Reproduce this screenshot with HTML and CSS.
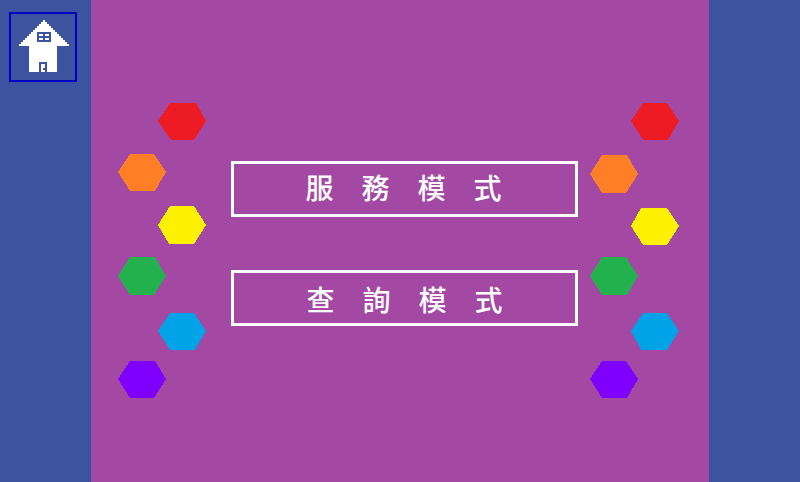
FILE: index.html
```html
<!DOCTYPE html>
<html lang="zh-Hant">
<head>
<meta charset="utf-8">
<meta name="viewport" content="width=device-width, initial-scale=1">
<title>模式</title>
<link rel="stylesheet" href="styles.css">
</head>
<body>
<nav class="side">
  <a class="home" href="#" aria-label="首頁">
    <svg class="home-icon" viewBox="0 0 32 33" shape-rendering="crispEdges" aria-hidden="true">
      <path class="house" fill-rule="evenodd" d="M16 3h1v1h1v1h1v1h1v1h1v1h1v1h1v1h1v1h1v1h1v1h1v1h1v1h1v1h-6v13H9V16H4v-1h1v-1h1v-1h1v-1h1v-1h1v-1h1V9h1V8h1V7h1V6h1V5h1V4h1z M13 9v5h7V9z M14 24v5h4v-5z"/>
      <path class="house" d="M14 10h2v1h-2z M17 10h2v1h-2z M14 12h2v1h-2z M17 12h2v1h-2z M15 25h2v2h-1v1h1v1h-2z"/>
    </svg>
  </a>
</nav>
<main class="stage">
  <svg class="gems" viewBox="0 0 89 296" shape-rendering="crispEdges" aria-hidden="true">
    <polygon class="red" points="40,18 52,0 78,0 88,18 76,37 53,37"/>
    <polygon class="orange" points="0,69 12,51 36,51 48,69 37,88 12,88"/>
    <polygon class="yellow" points="40,122 52,103 76,103 88,122 76,141 51,141"/>
    <polygon class="green" points="0,173 12,154 37,154 48,173 36,192 12,192"/>
    <polygon class="blue" points="40,228 52,210 76,210 88,228 77,247 52,247"/>
    <polygon class="violet" points="0,276 12,258 37,258 48,276 36,295 12,295"/>
  </svg>
  <div class="menu">
    <button class="mode mode-service" type="button">服　務　模　式</button>
    <button class="mode mode-query" type="button">查　詢　模　式</button>
  </div>
  <svg class="gems" viewBox="0 0 89 296" shape-rendering="crispEdges" aria-hidden="true">
    <polygon class="red" points="41,18 53,0 77,0 89,18 78,37 53,37"/>
    <polygon class="orange" points="0,71 12,52 37,52 48,71 36,90 12,90"/>
    <polygon class="yellow" points="41,123 51,105 77,105 89,123 77,142 53,142"/>
    <polygon class="green" points="0,173 12,154 36,154 48,173 37,192 12,192"/>
    <polygon class="blue" points="41,228 53,210 77,210 89,228 77,247 51,247"/>
    <polygon class="violet" points="0,276 12,258 36,258 48,276 37,295 12,295"/>
  </svg>
</main>
</body>
</html>
```
FILE: styles.css
```css
* {
  box-sizing: border-box;
}

body {
  display: grid;
  grid-template-columns: 91px 1fr 91px;
  min-height: 100vh;
  margin: 0;
  background: #3c54a0;
  font-family: "Noto Sans CJK TC", sans-serif;
}

.side {
  padding: 12px 9px;
}

.home {
  display: block;
  width: 68px;
  border: 2px solid #0000c0;
}

.home-icon {
  display: block;
  width: 64px;
  height: 66px;
}

.house {
  fill: #fff;
}

.stage {
  display: flex;
  align-items: flex-start;
  padding: 103px 30px 40px 27px;
  background: #a349a4;
}

.gems {
  flex: none;
  width: 89px;
  height: 296px;
}

.red { fill: #ed1c24; }
.orange { fill: #ff7f27; }
.yellow { fill: #fff200; }
.green { fill: #22b14c; }
.blue { fill: #00a2e8; }
.violet { fill: #7f00ff; }

.menu {
  flex: 1;
  display: flex;
  flex-direction: column;
  gap: 53px;
  padding: 58px 12px 0 24px;
}

.mode {
  height: 56px;
  padding: 0;
  border: 3px solid #fff;
  background: none;
  color: #fff;
  font-family: inherit;
  font-size: 28px;
  font-weight: 500;
  line-height: 44px;
  cursor: pointer;
}

.mode-service {
  padding: 0 2px 4px 0;
}

.mode-query {
  padding-top: 2px;
}
```
